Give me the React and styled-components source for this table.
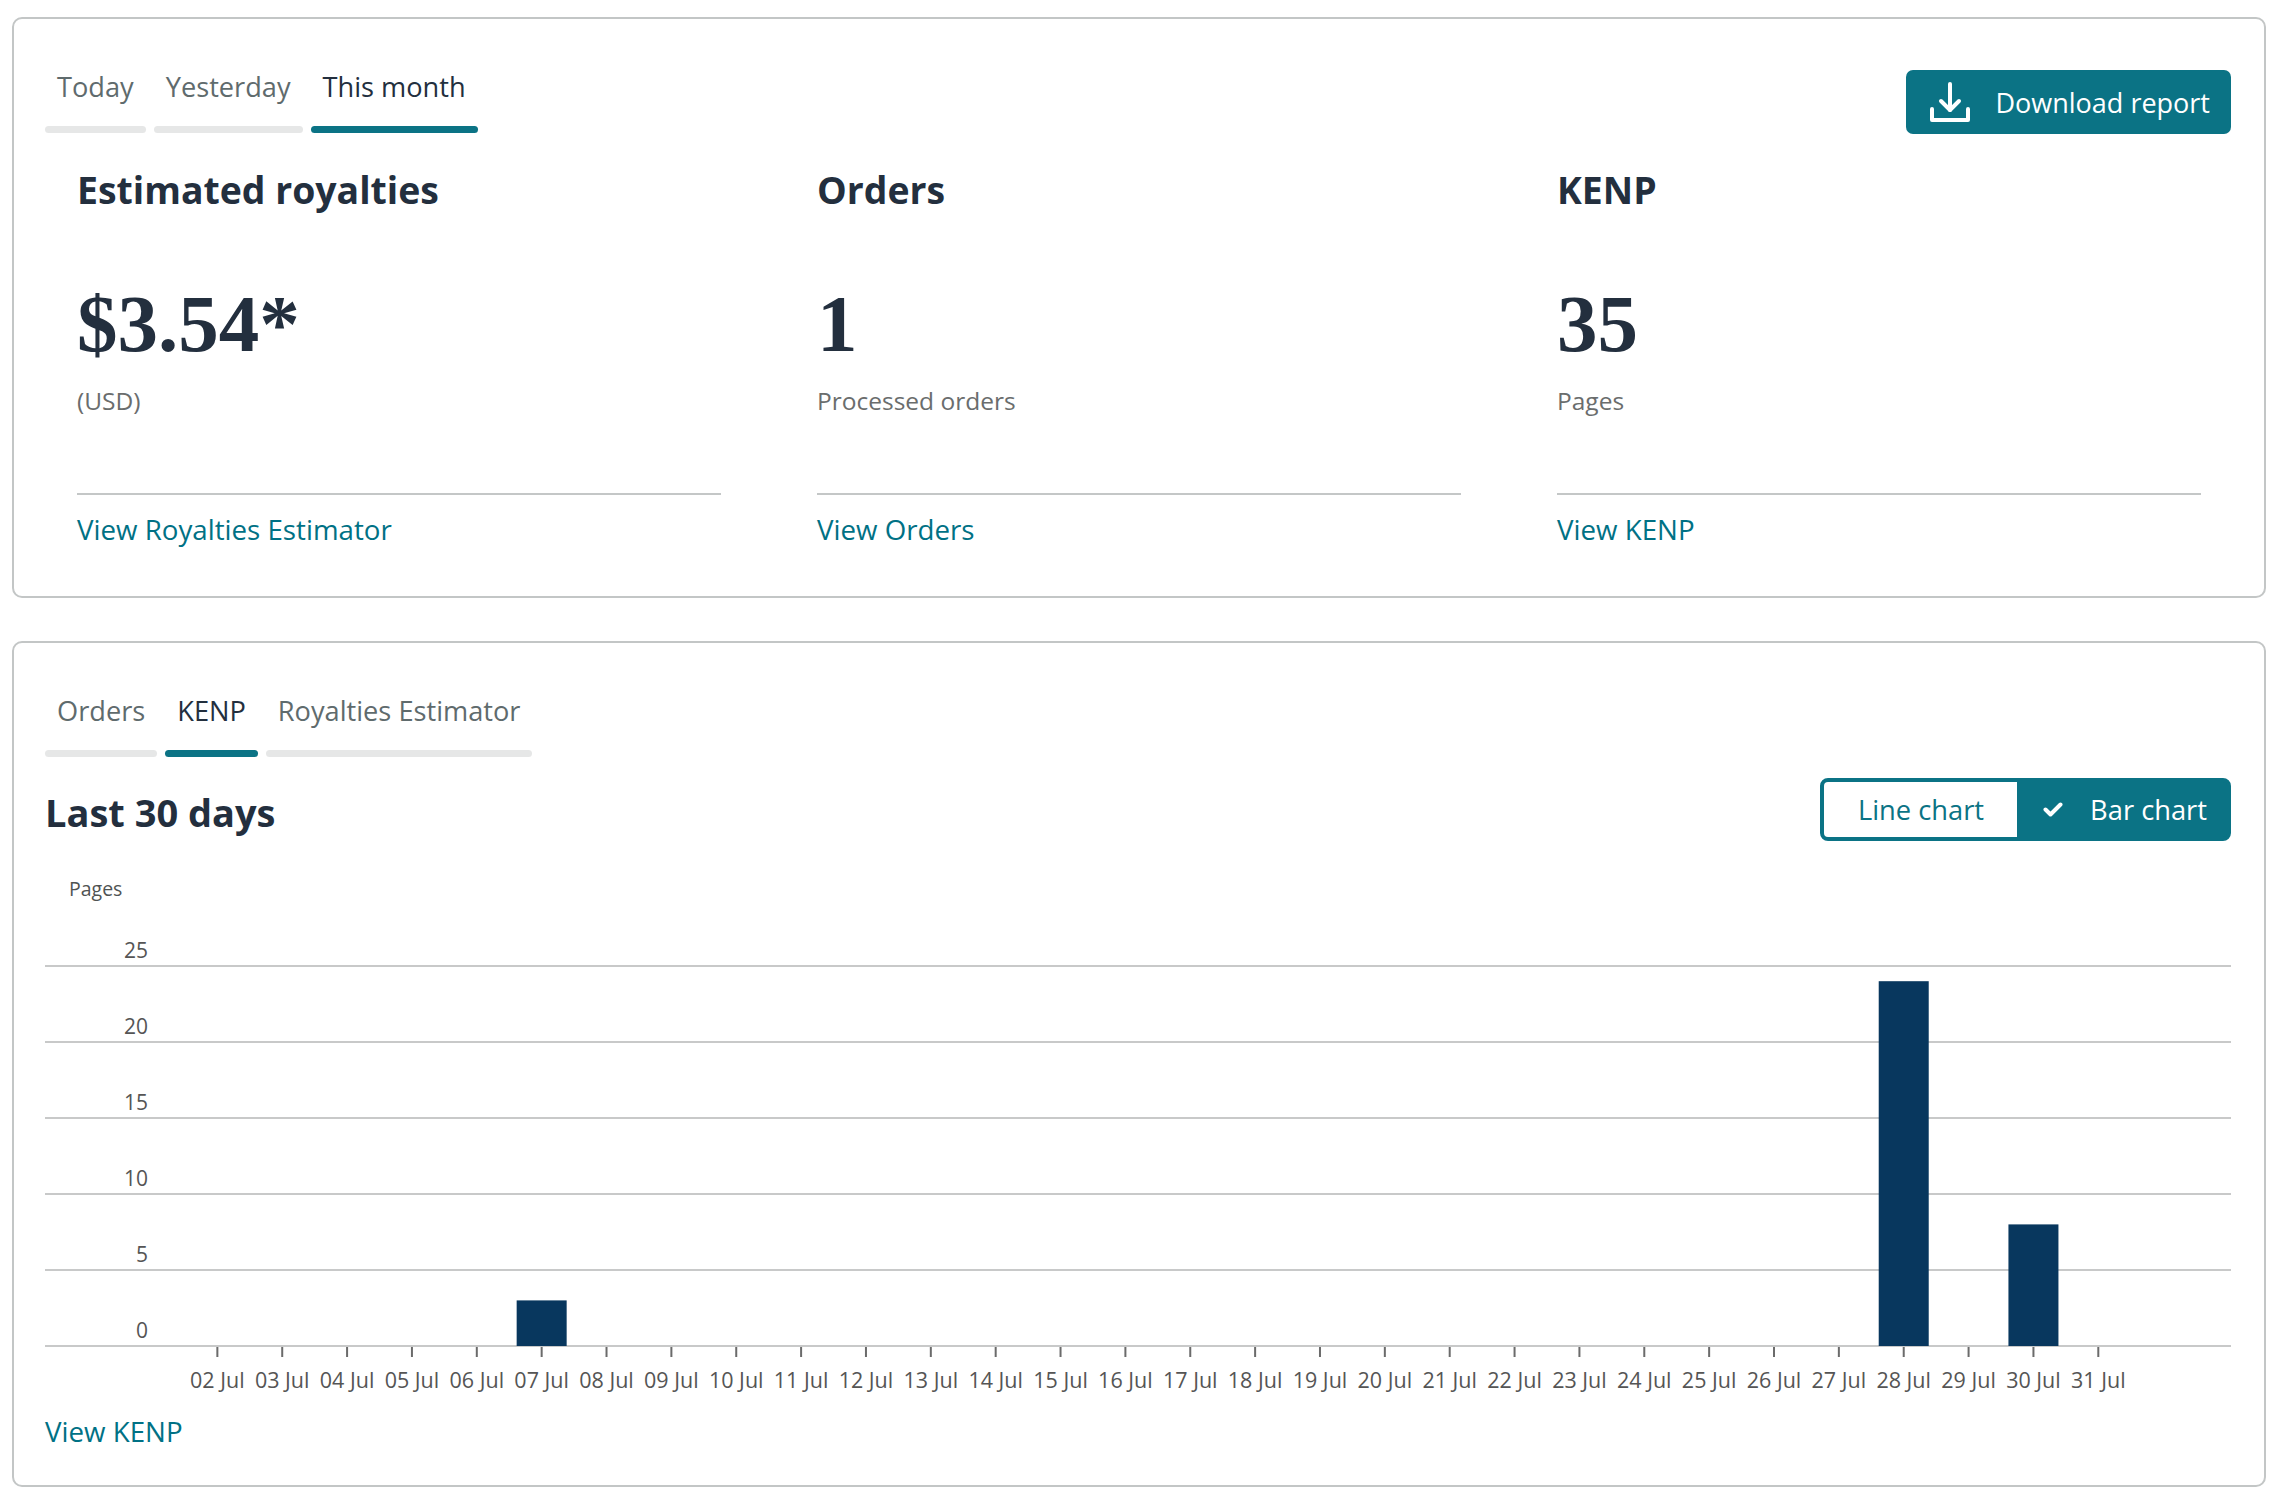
import React, { useState } from 'react';
import styled, { createGlobalStyle } from 'styled-components';

const TEAL = '#0b7385';
const LINK = '#007185';
const INK = '#232f3e';
const GRID = '#c8c9c9';

const GlobalStyle = createGlobalStyle`
  html, body {
    margin: 0;
    padding: 0;
    background: #ffffff;
  }
  body {
    font-family: "Open Sans", "Noto Sans", sans-serif;
    color: ${INK};
  }
`;

const Page = styled.div`
  display: flex;
  flex-direction: column;
  gap: 43px;
  padding: 17px 12px 16px 12px;
`;

const Card = styled.section`
  border: 2px solid #c3c6c6;
  border-radius: 10px;
  padding: 50px 33px ${props => props.$pb}px 31px;
  background: #fff;
`;

const Header = styled.div`
  display: flex;
  justify-content: space-between;
  align-items: flex-start;
`;

const TabBar = styled.div`
  display: flex;
  gap: 8px;
`;

const Tab = styled.button`
  display: flex;
  flex-direction: column;
  align-items: stretch;
  padding: 0;
  border: none;
  background: none;
  cursor: pointer;
  font-family: inherit;
`;

const TabLabel = styled.span`
  padding: 0 12px;
  font-size: 27.2px;
  line-height: 36px;
  white-space: nowrap;
  color: ${props => (props.$active ? INK : '#5f6b6d')};
`;

const TabLine = styled.span`
  display: block;
  height: 7px;
  margin-top: 21px;
  border-radius: 4px;
  background: ${props => (props.$active ? TEAL : '#e6e7e7')};
`;

const DownloadButton = styled.button`
  display: flex;
  align-items: center;
  gap: 25px;
  height: 64px;
  margin-top: 1px;
  padding: 0 21px 0 24px;
  border: none;
  border-radius: 7px;
  background: ${TEAL};
  color: #fff;
  font-family: inherit;
  font-size: 27px;
  cursor: pointer;
`;

const Metrics = styled.div`
  display: grid;
  grid-template-columns: repeat(3, 740px);
  margin-top: 32px;
`;

const Metric = styled.div`
  display: flex;
  flex-direction: column;
  padding: 0 64px 0 32px;
`;

const MetricTitle = styled.h2`
  margin: 0;
  font-size: 37.4px;
  line-height: 48px;
  font-weight: 700;
  color: ${INK};
`;

const MetricValue = styled.div`
  margin-top: 70px;
  font-family: "Liberation Serif", "Times New Roman", serif;
  font-weight: 700;
  font-size: 81px;
  line-height: 81px;
  color: ${INK};
`;

const MetricCaption = styled.div`
  margin-top: 19px;
  font-size: 24.5px;
  line-height: 34px;
  color: #6a6d6d;
`;

const Divider = styled.hr`
  margin: 75px 0 0 0;
  border: none;
  height: 2px;
  background: #c4c7c7;
`;

const TextLink = styled.a`
  display: block;
  margin-top: ${props => props.$mt}px;
  font-size: 27.7px;
  line-height: 38px;
  color: ${LINK};
  text-decoration: none;
  cursor: pointer;
`;

const ChartHeader = styled.div`
  display: flex;
  justify-content: space-between;
  align-items: flex-start;
  margin-top: 21px;
`;

const ChartTitle = styled.h2`
  margin: 11px 0 0 0;
  font-size: 38px;
  line-height: 46px;
  font-weight: 700;
  color: ${INK};
`;

const ToggleGroup = styled.div`
  display: flex;
  border: 4px solid ${TEAL};
  border-radius: 8px;
  overflow: hidden;
  background: ${TEAL};
`;

const ToggleButton = styled.button`
  display: flex;
  align-items: center;
  gap: 27px;
  height: 55px;
  padding: ${props => (props.$active ? '0 20px 0 26px' : '0 33px 0 34px')};
  border: none;
  background: ${props => (props.$active ? TEAL : '#fff')};
  color: ${props => (props.$active ? '#fff' : TEAL)};
  font-family: inherit;
  font-size: 27.3px;
  cursor: pointer;
`;

const ChartSvg = styled.svg`
  display: block;
  margin-top: 19px;
  font-family: "Open Sans", "Noto Sans", sans-serif;
`;

const DownloadIcon = () => (
  <svg width="40" height="40" viewBox="0 0 40 40" fill="none" stroke="#fff" strokeWidth="4" strokeLinecap="round" strokeLinejoin="round">
    <path d="M20 2 V28" />
    <path d="M11 19 L20 28 L29 19" />
    <path d="M2 27 V38 H38 V27" />
  </svg>
);

const CheckIcon = () => (
  <svg width="20" height="15" viewBox="0 0 20 15" fill="none" stroke="#fff" strokeWidth="4" strokeLinecap="round" strokeLinejoin="round">
    <polyline points="2.5,7.5 7.5,12.5 17.5,2.5" />
  </svg>
);

const metrics = [
  { title: 'Estimated royalties', value: '$3.54*', caption: '(USD)', link: 'View Royalties Estimator' },
  { title: 'Orders', value: '1', caption: 'Processed orders', link: 'View Orders' },
  { title: 'KENP', value: '35', caption: 'Pages', link: 'View KENP' },
];

const kenp = { 7: 3, 28: 24, 30: 8 };

const CHART_W = 2186;
const CHART_H = 540;
const BASE_Y = 486;
const STEP_Y = 76;
const PER_PAGE = STEP_Y / 5;
const dayX = d => 107.5 + (d - 1) * 64.86;

const BarChart = () => {
  const days = [];
  for (let d = 2; d <= 31; d++) days.push(d);
  return (
    <ChartSvg width={CHART_W} height={CHART_H} viewBox={`0 0 ${CHART_W} ${CHART_H}`}>
      <text x="24" y="36" fontSize="19.5" fill="#4f5353">Pages</text>
      {[0, 5, 10, 15, 20, 25].map(v => {
        const y = BASE_Y - (v / 5) * STEP_Y;
        return (
          <g key={v}>
            <rect x="0" y={y - 1} width={CHART_W} height="2" fill={GRID} />
            <text x="103" y={y - 8} fontSize="21" fill="#555" textAnchor="end">{v}</text>
          </g>
        );
      })}
      {days.map(d => (
        <g key={d}>
          <rect x={dayX(d) - 1} y={BASE_Y + 1} width="2" height="10" fill="#6b6b6b" />
          <text x={dayX(d)} y="528" fontSize="21.5" fill="#555" textAnchor="middle">
            {String(d).padStart(2, '0')} Jul
          </text>
        </g>
      ))}
      {Object.entries(kenp).map(([d, v]) => (
        <rect key={d} x={dayX(Number(d)) - 25} y={BASE_Y - v * PER_PAGE} width="50" height={v * PER_PAGE} fill="#08375e" />
      ))}
    </ChartSvg>
  );
};

const App = () => {
  const [period, setPeriod] = useState('This month');
  const [view, setView] = useState('KENP');
  const [chartType, setChartType] = useState('bar');

  return (
    <Page>
      <GlobalStyle />
      <Card $pb={48}>
        <Header>
          <TabBar>
            {['Today', 'Yesterday', 'This month'].map(t => (
              <Tab key={t} onClick={() => setPeriod(t)}>
                <TabLabel $active={period === t}>{t}</TabLabel>
                <TabLine $active={period === t} />
              </Tab>
            ))}
          </TabBar>
          <DownloadButton>
            <DownloadIcon />
            Download report
          </DownloadButton>
        </Header>
        <Metrics>
          {metrics.map(m => (
            <Metric key={m.title}>
              <MetricTitle>{m.title}</MetricTitle>
              <MetricValue>{m.value}</MetricValue>
              <MetricCaption>{m.caption}</MetricCaption>
              <Divider />
              <TextLink $mt={15}>{m.link}</TextLink>
            </Metric>
          ))}
        </Metrics>
      </Card>

      <Card $pb={35}>
        <TabBar>
          {['Orders', 'KENP', 'Royalties Estimator'].map(t => (
            <Tab key={t} onClick={() => setView(t)}>
              <TabLabel $active={view === t}>{t}</TabLabel>
              <TabLine $active={view === t} />
            </Tab>
          ))}
        </TabBar>
        <ChartHeader>
          <ChartTitle>Last 30 days</ChartTitle>
          <ToggleGroup>
            <ToggleButton $active={chartType === 'line'} onClick={() => setChartType('line')}>
              {chartType === 'line' && <CheckIcon />}
              Line chart
            </ToggleButton>
            <ToggleButton $active={chartType === 'bar'} onClick={() => setChartType('bar')}>
              {chartType === 'bar' && <CheckIcon />}
              Bar chart
            </ToggleButton>
          </ToggleGroup>
        </ChartHeader>
        <BarChart />
        <TextLink $mt={12}>View KENP</TextLink>
      </Card>
    </Page>
  );
};

export default App;
